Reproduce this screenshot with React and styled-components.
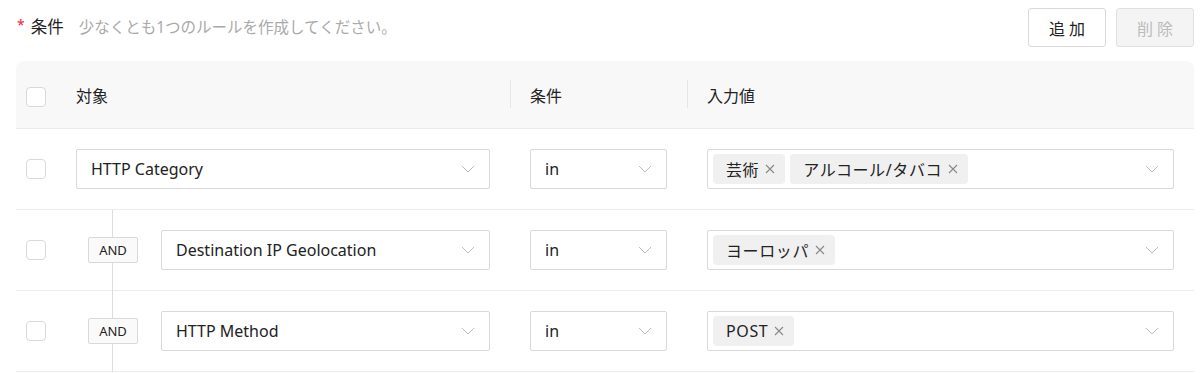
import React from "react";
import styled, { createGlobalStyle } from "styled-components";

const GlobalStyle = createGlobalStyle`
  body {
    margin: 0;
    background: #fff;
    font-family: "Noto Sans", "Noto Sans CJK JP", sans-serif;
    color: #222;
  }
`;

const Page = styled.div`
  padding: 8px 8px 0 16px;
  width: 1178px;
`;

const TopBar = styled.div`
  display: flex;
  align-items: center;
  justify-content: space-between;
  height: 39px;
  margin-bottom: 14px;
`;

const Title = styled.div`
  display: flex;
  align-items: center;
  font-size: 16.5px;
  line-height: 1;
  padding-left: 1px;
`;

const Star = styled.span`
  color: #f5222d;
  font-size: 14px;
  margin-right: 6px;
  position: relative;
  top: -3px;
`;

const Hint = styled.span`
  color: #aaa;
  font-size: 15.5px;
  margin-left: 15px;
`;

const Actions = styled.div`
  display: flex;
  gap: 10px;
`;

const Button = styled.button`
  width: 78px;
  height: 39px;
  border: 1px solid ${p => (p.disabled ? "#e0e0e0" : "#d9d9d9")};
  border-radius: 3px;
  background: ${p => (p.disabled ? "#f4f4f4" : "#fff")};
  color: ${p => (p.disabled ? "#bbb" : "#222")};
  font-family: "Noto Sans CJK JP", sans-serif;
  font-size: 16px;
  letter-spacing: 4px;
  padding: 0 0 0 4px;
`;

const Table = styled.div`
  display: grid;
  grid-template-columns: 44px 450px 177px 1fr;
`;

const HeadCell = styled.div`
  height: 67px;
  background: #f8f8f8;
  border-bottom: 1px solid #ececec;
  display: flex;
  align-items: center;
  padding-left: ${p => p.$pad || 20}px;
  font-size: 16px;
  position: relative;
  ${p => p.$first && "border-top-left-radius: 8px;"}
  ${p => p.$last && "border-top-right-radius: 8px;"}
  ${p =>
    p.$divider &&
    `&::before {
      content: "";
      position: absolute;
      left: 0;
      top: 19px;
      height: 28px;
      width: 1px;
      background: #e6e6e6;
    }`}
`;

const Cell = styled.div`
  height: 80px;
  border-bottom: 1px solid #ececec;
  display: flex;
  align-items: center;
  padding: 0 20px 0 ${p => p.$pad ?? 20}px;
  position: relative;
  ${p =>
    p.$nested &&
    `&::before {
      content: "";
      position: absolute;
      left: 52px;
      top: 0;
      bottom: -1px;
      width: 1px;
      background: #ddd;
    }`}
`;

const Checkbox = styled.span`
  flex-shrink: 0;
  width: 20px;
  height: 20px;
  box-sizing: border-box;
  border: 1px solid #d9d9d9;
  border-radius: 4px;
  background: #fff;
  margin-top: ${p => (p.$head ? 4 : 0)}px;
`;

const AndBox = styled.span`
  position: relative;
  width: 50px;
  height: 26px;
  box-sizing: border-box;
  border: 1px solid #d9d9d9;
  border-radius: 2px;
  background: #fafafa;
  font-size: 13px;
  display: flex;
  align-items: center;
  justify-content: center;
  margin-right: 23px;
  flex-shrink: 0;
`;

const Select = styled.div`
  flex: 1;
  height: 40px;
  box-sizing: border-box;
  border: 1px solid #d9d9d9;
  border-radius: 2px;
  background: #fff;
  display: flex;
  align-items: center;
  justify-content: space-between;
  padding: 0 14px 0 ${p => (p.$tags ? 5 : 14)}px;
  font-size: 16px;
`;

const Tags = styled.div`
  display: flex;
  gap: 5px;
`;

const Tag = styled.span`
  height: 30px;
  display: inline-flex;
  align-items: center;
  gap: 6px;
  padding: 0 10px 0 13px;
  background: #f0f0f0;
  border-radius: 4px;
  font-size: 16px;
  letter-spacing: 0.6px;
`;

const Chevron = () => (
  <svg width="14" height="8" viewBox="0 0 14 8">
    <polyline points="1,1 7,7 13,1" fill="none" stroke="#bbb" strokeWidth="1" />
  </svg>
);

const Close = () => (
  <svg width="10" height="10" viewBox="0 0 10 10">
    <path d="M1 1L9 9M9 1L1 9" stroke="#888" strokeWidth="1.1" />
  </svg>
);

const rows = [
  { target: "HTTP Category", values: ["芸術", "アルコール/タバコ"] },
  { target: "Destination IP Geolocation", values: ["ヨーロッパ"], nested: true },
  { target: "HTTP Method", values: ["POST"], nested: true },
];

const App = () => (
  <Page>
    <GlobalStyle />
    <TopBar>
      <Title>
        <Star>*</Star>
        条件
        <Hint>少なくとも1つのルールを作成してください。</Hint>
      </Title>
      <Actions>
        <Button>追加</Button>
        <Button disabled>削除</Button>
      </Actions>
    </TopBar>
    <Table>
      <HeadCell $first $pad={10}>
        <Checkbox $head />
      </HeadCell>
      <HeadCell $pad={16}>対象</HeadCell>
      <HeadCell $divider>条件</HeadCell>
      <HeadCell $divider $last>入力値</HeadCell>
      {rows.map(row => (
        <React.Fragment key={row.target}>
          <Cell $pad={10}>
            <Checkbox />
          </Cell>
          <Cell $pad={row.nested ? 28 : 16} $nested={row.nested}>
            {row.nested && <AndBox>AND</AndBox>}
            <Select>
              {row.target}
              <Chevron />
            </Select>
          </Cell>
          <Cell>
            <Select>
              in
              <Chevron />
            </Select>
          </Cell>
          <Cell>
            <Select $tags>
              <Tags>
                {row.values.map(v => (
                  <Tag key={v}>
                    {v}
                    <Close />
                  </Tag>
                ))}
              </Tags>
              <Chevron />
            </Select>
          </Cell>
        </React.Fragment>
      ))}
    </Table>
  </Page>
);

export default App;
